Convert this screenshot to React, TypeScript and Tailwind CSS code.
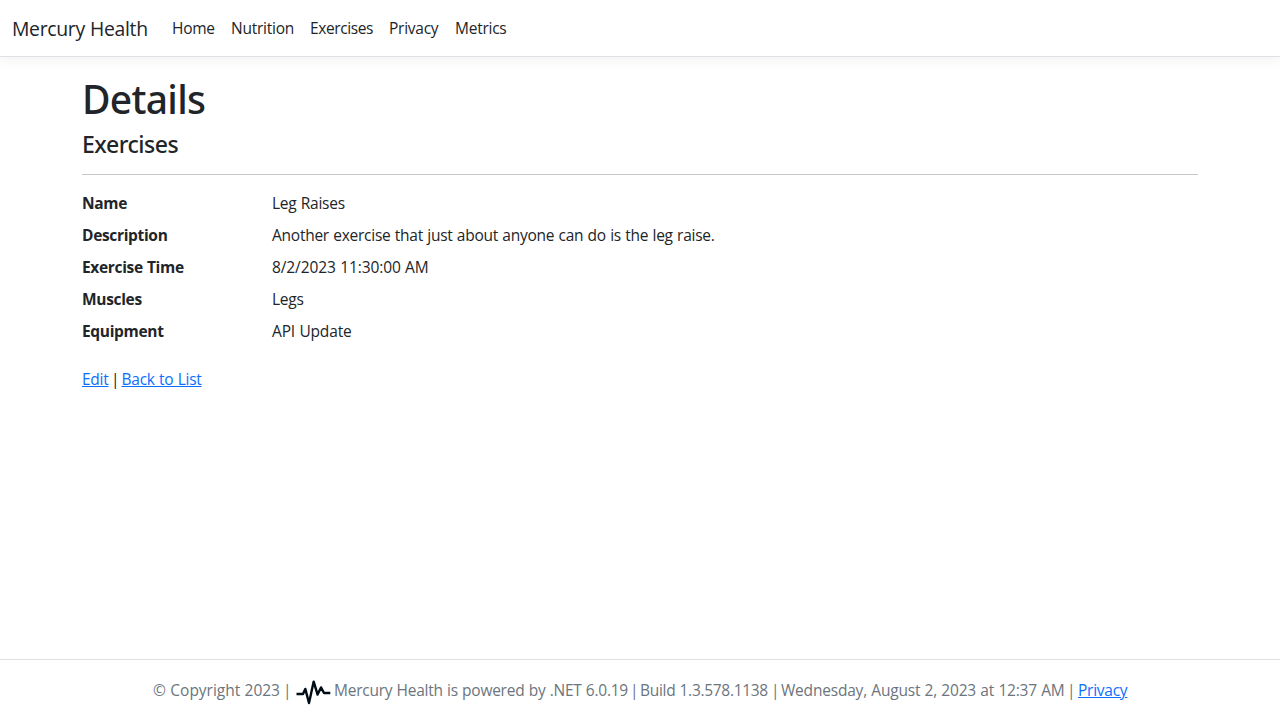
const navItems = [
  { label: "Home", style: "w-[59px]" },
  { label: "Nutrition", style: "w-[79px]" },
  { label: "Exercises", style: "w-[79px] tracking-[-0.4px]" },
  { label: "Privacy", style: "w-[66px]" },
  { label: "Metrics", style: "w-[67px]" },
];

const details = [
  { term: "Name", value: "Leg Raises", style: "" },
  { term: "Description", value: "Another exercise that just about anyone can do is the leg raise.", style: "" },
  { term: "Exercise Time", value: "8/2/2023 11:30:00 AM", style: "tracking-[-0.1px]" },
  { term: "Muscles", value: "Legs", style: "" },
  { term: "Equipment", value: "API Update", style: "tracking-[-0.15px]" },
];

function PulseIcon() {
  return (
    <svg className="mt-0.5 mr-0.5 h-8 w-[38px] shrink-0" viewBox="0 0 38 32" fill="none">
      <path
        d="M2.5 19H9L11.3 13.9L15 28L19.7 6.6L23.6 19.6L27 12.4L30 18H36.3"
        stroke="#020c14"
        strokeWidth="2.4"
        strokeLinejoin="round"
      />
    </svg>
  );
}

export default function App() {
  return (
    <div className="flex h-[720px] flex-col overflow-hidden bg-white font-['Open_Sans',sans-serif] text-[15.5px] leading-6 tracking-[-0.25px] whitespace-nowrap text-[#212529] [word-spacing:0.5px]">
      <header className="flex h-[57px] shrink-0 items-center border-b border-[#dee2e6] px-3 shadow-[0_4px_12px_rgba(0,0,0,0.05)]">
        <a className="w-[152px] pt-px text-[19.4px] leading-[30px] tracking-[-0.32px]">Mercury Health</a>
        <nav className="flex pl-2">
          {navItems.map((item) => (
            <a key={item.label} className={item.style}>{item.label}</a>
          ))}
        </nav>
      </header>
      <main className="mx-auto w-[1116px] grow pt-[18px]">
        <h1 className="mb-[7px] font-['Noto_Sans'] text-[39px] leading-12 font-medium tracking-[-0.7px]">Details</h1>
        <h4 className="font-['Noto_Sans'] text-[23px] leading-[29px] font-medium tracking-[-0.45px]">Exercises</h4>
        <hr className="mt-[15px] mb-4 border-[#c7c8c9]" />
        <dl className="mb-4 grid grid-cols-[190px_1fr] gap-y-2">
          {details.map((row) => (
            <div key={row.term} className="contents">
              <dt className="font-bold tracking-[-0.33px]">{row.term}</dt>
              <dd className={row.style}>{row.value}</dd>
            </div>
          ))}
        </dl>
        <div className="flex pt-2">
          <a className="text-[#0d6efd] underline">Edit</a>
          <span className="w-[13px] text-center">|</span>
          <a className="text-[#0d6efd] underline">Back to List</a>
        </div>
      </main>
      <footer className="flex h-[61px] shrink-0 items-center border-t border-[#dee2e6] pl-[153px] text-[#6c757d]">
        <span className="w-[130px] tracking-[-0.03px]">© Copyright 2023</span>
        <span className="w-[11px]">|</span>
        <PulseIcon />
        <span className="w-[296px]">Mercury Health is powered by .NET 6.0.19</span>
        <span className="w-[10px]">|</span>
        <span className="w-[131px] tracking-[-0.3px]">Build 1.3.578.1138</span>
        <span className="w-[10px]">|</span>
        <span className="w-[286px] tracking-[-0.2px]">Wednesday, August 2, 2023 at 12:37 AM</span>
        <span className="w-[11px]">|</span>
        <a className="text-[#0d6efd] underline">Privacy</a>
      </footer>
    </div>
  );
}
